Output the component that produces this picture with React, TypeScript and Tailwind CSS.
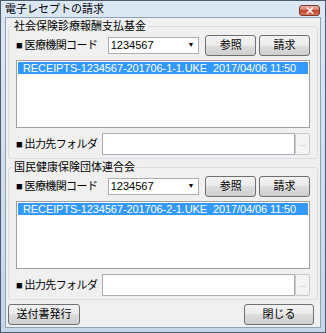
const btn =
  "flex items-center justify-center rounded-[3px] border border-[#707070] bg-[linear-gradient(#f2f2f2,#ebebeb_50%,#dddddd_50%,#cfcfcf)] text-[11px] leading-none text-black";

const Group = ({ title, file }: { title: string; file: string }) => {
  return (
    <div className="relative pt-[6px]">
      <span className="absolute left-[4px] top-0 bg-[#f0f0f0] px-[2px] text-[11px] leading-[12px]">{title}</span>
      <div className="rounded-[3px] border border-[#d5dfe5] px-[7px] pt-[8px] pb-[3px]">
        <div className="flex h-[21px] items-center">
          <span className="w-[92px] whitespace-nowrap text-[11px] tracking-[-0.6px]">■ 医療機関コード</span>
          <div className="flex h-[17px] w-[92px] items-center justify-between border border-[#abadb3] bg-white pl-[2px] pr-[4px] text-[11px]">
            <span>1234567</span>
            <span className="text-[7px]">▼</span>
          </div>
          <button className={btn + " ml-[6px] h-[21px] w-[51px]"}>参照</button>
          <button className={btn + " ml-[3px] h-[21px] w-[51px]"}>請求</button>
        </div>
        <div className="mt-[4px] h-[68px] border border-[#a0a0a0] bg-white p-[1px]">
          <div className="flex h-[12px] items-center whitespace-pre bg-[#3399ff] pl-[5px] text-[11px] leading-none tracking-[-0.1px] text-white">
            {file}
          </div>
        </div>
        <div className="mt-[5px] flex h-[22px] items-center">
          <span className="w-[86px] whitespace-nowrap text-[11px] tracking-[-0.6px]">■ 出力先フォルダ</span>
          <div className="h-[22px] w-[193px] border border-[#abadb3] bg-white"></div>
          <div className="flex h-[22px] w-[15px] items-center justify-center rounded-[2px] border border-[#c9c9c9] bg-[#f4f4f4] text-[8px] text-[#a0a0a0]">
            ...
          </div>
        </div>
      </div>
    </div>
  );
};

export default function App() {
  return (
    <div className="relative flex h-[333px] w-[326px] flex-col border border-[#4d5d70] bg-[linear-gradient(#dce7f4,#c5d6ea)] font-['Liberation_Sans','Noto_Sans_CJK_JP',sans-serif] text-black">
      <div className="flex h-[16px] items-center pl-[4px] text-[11px]">電子レセプトの請求</div>
      <div className="absolute right-[5px] top-[4px] flex h-[11px] w-[21px] items-center justify-center rounded-[3px] border border-[#7a3a30] bg-[linear-gradient(#e9ada0,#d87561_50%,#c4452e_50%,#d9735c)]">
        <svg width="8" height="7" viewBox="0 0 8 7">
          <path d="M1 0.5 L7 6.5 M7 0.5 L1 6.5" stroke="white" strokeWidth="1.6" />
        </svg>
      </div>
      <div className="mx-[4px] mb-[4px] flex flex-1 flex-col border border-[#8ea2b8] bg-[#f0f0f0] px-[2px] pt-[2px]">
        <Group title="社会保険診療報酬支払基金" file={"RECEIPTS-1234567-201706-1-1.UKE  2017/04/06 11:50"} />
        <div className="mt-[2px]">
          <Group title="国民健康保険団体連合会" file={"RECEIPTS-1234567-201706-2-1.UKE  2017/04/06 11:50"} />
        </div>
        <div className="mt-[4px] flex justify-between pr-[4px]">
          <button className={btn + " h-[21px] w-[72px]"}>送付書発行</button>
          <button className={btn + " h-[21px] w-[70px]"}>閉じる</button>
        </div>
      </div>
    </div>
  );
}
